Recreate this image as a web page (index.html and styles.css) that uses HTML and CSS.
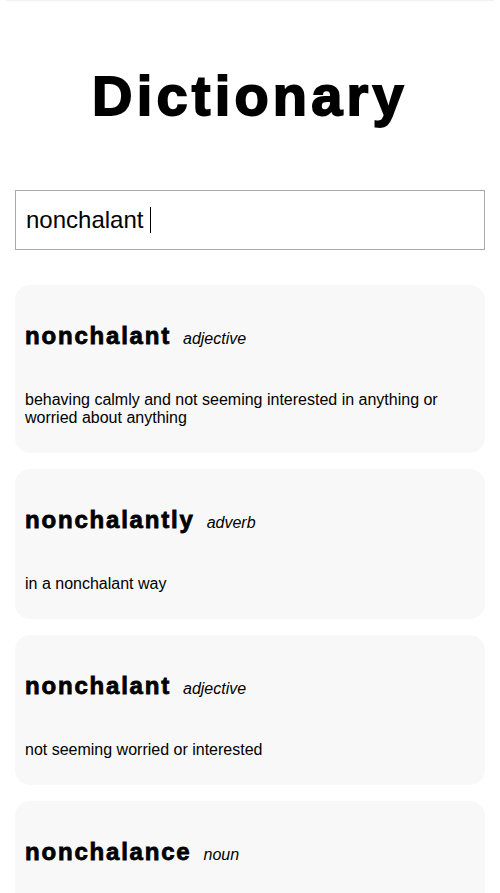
FILE: index.html
```html
<!DOCTYPE html>
<html lang="en">
<head>
<meta charset="utf-8">
<title>Dictionary</title>
<link rel="stylesheet" href="styles.css">
</head>
<body>
<div class="top-edge"></div>
<main class="page">
  <h1 class="title">Dictionary</h1>
  <div class="search" role="textbox" aria-label="Search word"><span class="search-text">nonchalant&nbsp;</span><span class="caret"></span></div>
  <section class="results">
    <article class="card">
      <div class="entry-head"><h2 class="word">nonchalant</h2><span class="pos">adjective</span></div>
      <p class="def">behaving calmly and not seeming interested in anything or worried about anything</p>
    </article>
    <article class="card">
      <div class="entry-head"><h2 class="word">nonchalantly</h2><span class="pos">adverb</span></div>
      <p class="def">in a nonchalant way</p>
    </article>
    <article class="card">
      <div class="entry-head"><h2 class="word">nonchalant</h2><span class="pos">adjective</span></div>
      <p class="def">not seeming worried or interested</p>
    </article>
    <article class="card card-last">
      <div class="entry-head"><h2 class="word">nonchalance</h2><span class="pos">noun</span></div>
    </article>
  </section>
</main>
</body>
</html>
```

FILE: styles.css
```css
html, body {
  margin: 0;
  padding: 0;
  background: #ffffff;
  color: #000000;
  font-family: "Liberation Sans", Arial, sans-serif;
}

.top-edge {
  height: 1px;
  margin: 0 6px;
  background: #f1f1f1;
  border-radius: 0 0 4px 4px;
}

.page {
  padding: 0 15px;
}

.title {
  margin: 63px 0 0;
  font-size: 56px;
  line-height: 64px;
  font-weight: 700;
  letter-spacing: 4.2px;
  text-align: center;
  -webkit-text-stroke: 1.8px #000;
}

.search {
  margin-top: 62px;
  height: 58px;
  border: 1px solid #a9a9a9;
  padding: 0 10px;
  display: flex;
  align-items: center;
  font-size: 24px;
  line-height: 28px;
}

.caret {
  display: inline-block;
  width: 1px;
  height: 26px;
  background: #000;
}

.results {
  margin-top: 35px;
  display: flex;
  flex-direction: column;
  gap: 16px;
}

.card {
  background: #f8f8f8;
  border-radius: 15px;
  padding: 37px 10px 26px;
}

.card-last {
  min-height: 120px;
}

.entry-head {
  display: flex;
  align-items: baseline;
  gap: 12px;
}

.word {
  margin: 0;
  font-size: 24px;
  line-height: 28px;
  font-weight: 700;
  letter-spacing: 1.8px;
  -webkit-text-stroke: 0.8px #000;
}

.pos {
  font-size: 16px;
  font-style: italic;
}

.def {
  margin: 41px 0 0;
  font-size: 16px;
  line-height: 18px;
}
```
